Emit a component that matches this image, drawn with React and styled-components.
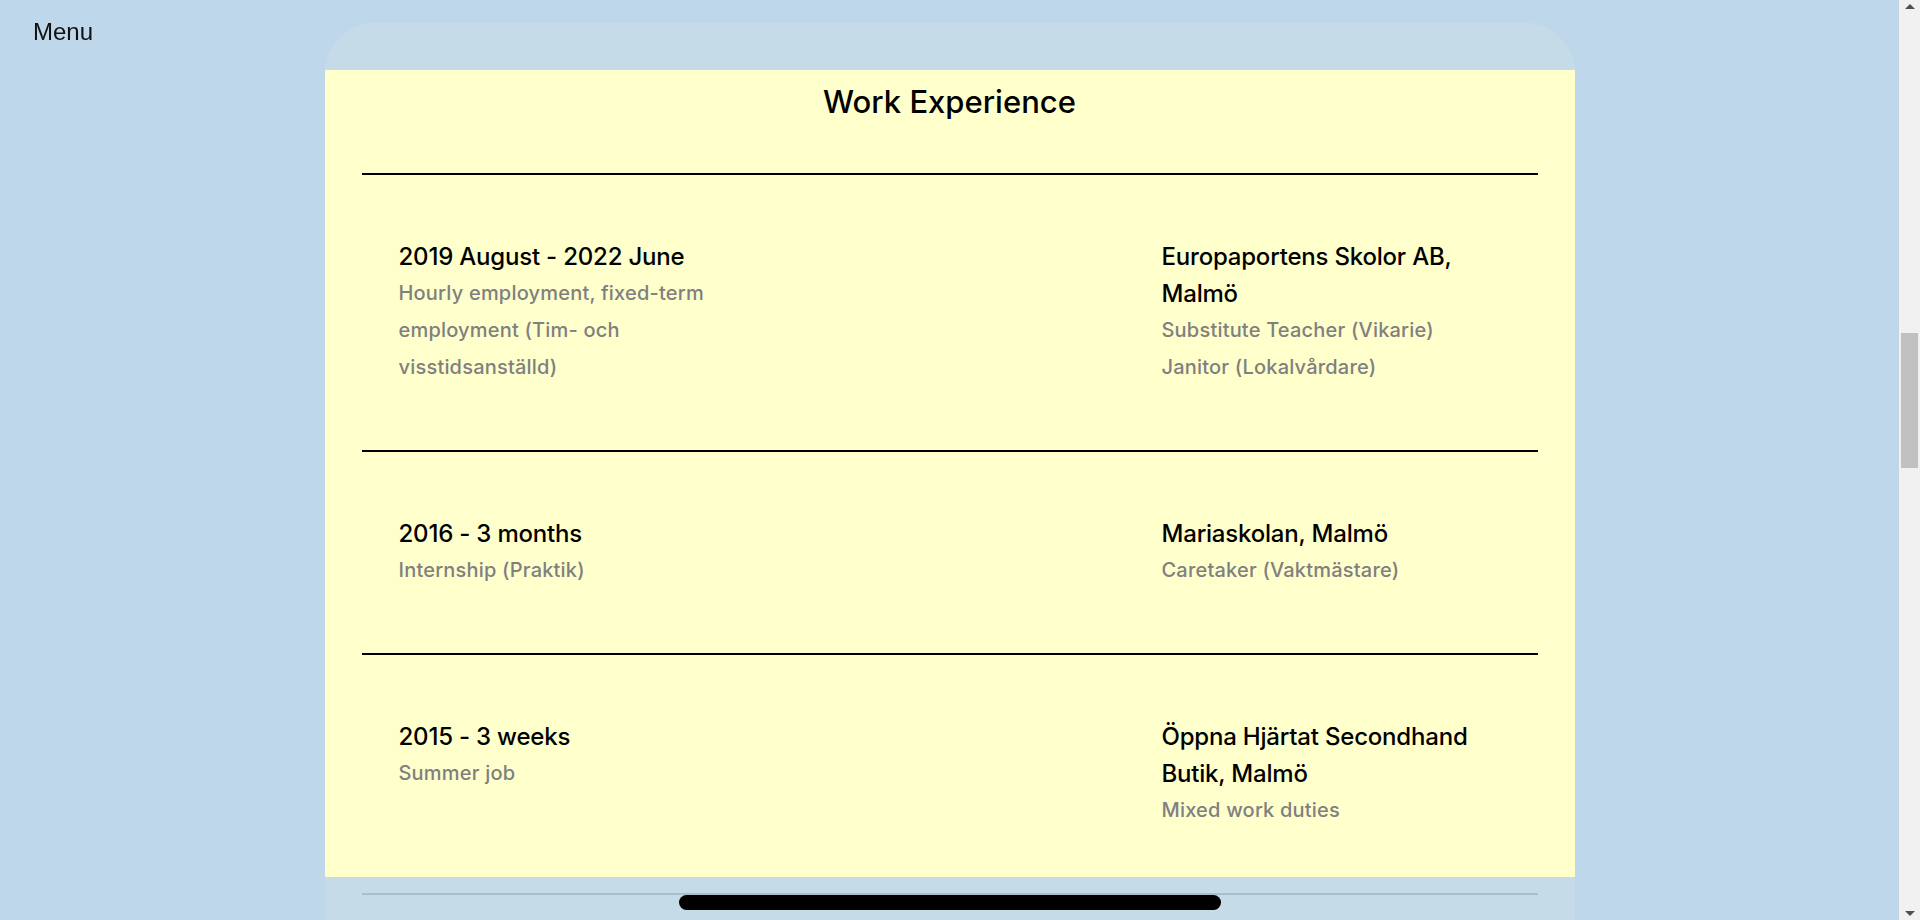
import styled, { createGlobalStyle } from 'styled-components';

const GlobalStyle = createGlobalStyle`
  html, body {
    margin: 0;
    padding: 0;
    background: #bed7ea;
  }
  body {
    font-family: Inter, "Noto Sans", sans-serif;
  }
`;

const bezelColor = 'rgba(190, 215, 234, 0.89)';
const scrollbarWidth = 21;

const MenuButton = styled.button`
  position: fixed;
  top: 18px;
  left: 33px;
  z-index: 10;
  padding: 0;
  border: 0;
  background: none;
  font-family: "Liberation Sans", Arial, sans-serif;
  font-size: 24px;
  color: #111;
  cursor: pointer;
`;

const Page = styled.main`
  padding: 23px ${scrollbarWidth}px 0 0;
`;

const Card = styled.section`
  width: 1250px;
  margin: 0 auto;
  background: #ffffcc;
  border-radius: 50px 50px 0 0;
  padding: 59px 37px 80px;
  box-sizing: border-box;
`;

const Heading = styled.h2`
  margin: 0 0 51px;
  text-align: center;
  font-size: 31px;
  font-weight: 500;
  line-height: 40px;
  color: #000;
`;

const List = styled.ul`
  list-style: none;
  margin: 0;
  padding: 0;
  border-bottom: 2px solid #000;
`;

const Entry = styled.li`
  display: flex;
  justify-content: space-between;
  padding: 63px 37px 64px;
  border-top: 2px solid #000;
`;

const Column = styled.div`
  width: 339px;
`;

const Title = styled.h3`
  margin: 0;
  font-size: 24px;
  font-weight: 500;
  letter-spacing: -0.2px;
  line-height: 37px;
  color: #000;
`;

const Detail = styled.p`
  margin: 0;
  font-size: 20px;
  font-weight: 500;
  letter-spacing: 0.2px;
  line-height: 37px;
  color: #808080;
`;

/* phone-style frame drawn over the scrolling card */
const Frame = styled.div`
  position: fixed;
  top: 0;
  left: 0;
  bottom: 0;
  right: ${scrollbarWidth}px;
  padding-top: 23px;
  box-sizing: border-box;
  display: flex;
  flex-direction: column;
  align-items: center;
  justify-content: space-between;
  pointer-events: none;
`;

const TopBezel = styled.div`
  width: 1250px;
  height: 47px;
  border-radius: 50px 50px 0 0;
  background: ${bezelColor};
`;

const BottomBezel = styled.div`
  width: 1250px;
  height: 43px;
  display: flex;
  align-items: flex-end;
  justify-content: center;
  padding-bottom: 10px;
  box-sizing: border-box;
  background: ${bezelColor};
`;

const HomeIndicator = styled.div`
  width: 542px;
  height: 15px;
  border-radius: 8px;
  background: #000;
`;

const Scrollbar = styled.div`
  position: fixed;
  top: 0;
  right: 0;
  bottom: 0;
  width: ${scrollbarWidth}px;
  background: #f1f1f1;
  display: flex;
  flex-direction: column;
  align-items: center;
  justify-content: space-between;
  padding: 4px 0;
  box-sizing: border-box;
`;

const Arrow = styled.div`
  width: 0;
  height: 0;
  margin-left: 1px;
  border-left: 5px solid transparent;
  border-right: 5px solid transparent;
  ${(p) => (p.$down ? 'border-top: 5px solid #505050;' : 'border-bottom: 5px solid #505050;')}
`;

const Thumb = styled.div`
  position: absolute;
  top: 333px;
  left: 2px;
  width: 17px;
  height: 135px;
  background: #c1c1c1;
`;

const jobs = [
  {
    when: '2019 August - 2022 June',
    type: ['Hourly employment, fixed-term employment (Tim- och visstidsanställd)'],
    where: 'Europaportens Skolor AB, Malmö',
    roles: ['Substitute Teacher (Vikarie)', 'Janitor (Lokalvårdare)'],
  },
  {
    when: '2016 - 3 months',
    type: ['Internship (Praktik)'],
    where: 'Mariaskolan, Malmö',
    roles: ['Caretaker (Vaktmästare)'],
  },
  {
    when: '2015 - 3 weeks',
    type: ['Summer job'],
    where: 'Öppna Hjärtat Secondhand Butik, Malmö',
    roles: ['Mixed work duties'],
  },
];

export default function App() {
  return (
    <>
      <GlobalStyle />
      <MenuButton>Menu</MenuButton>
      <Page>
        <Card>
          <Heading>Work Experience</Heading>
          <List>
            {jobs.map((job) => (
              <Entry key={job.when}>
                <Column>
                  <Title>{job.when}</Title>
                  {job.type.map((t) => (
                    <Detail key={t}>{t}</Detail>
                  ))}
                </Column>
                <Column>
                  <Title>{job.where}</Title>
                  {job.roles.map((r) => (
                    <Detail key={r}>{r}</Detail>
                  ))}
                </Column>
              </Entry>
            ))}
          </List>
        </Card>
      </Page>
      <Frame>
        <TopBezel />
        <BottomBezel>
          <HomeIndicator />
        </BottomBezel>
      </Frame>
      <Scrollbar>
        <Arrow />
        <Arrow $down />
        <Thumb />
      </Scrollbar>
    </>
  );
}
